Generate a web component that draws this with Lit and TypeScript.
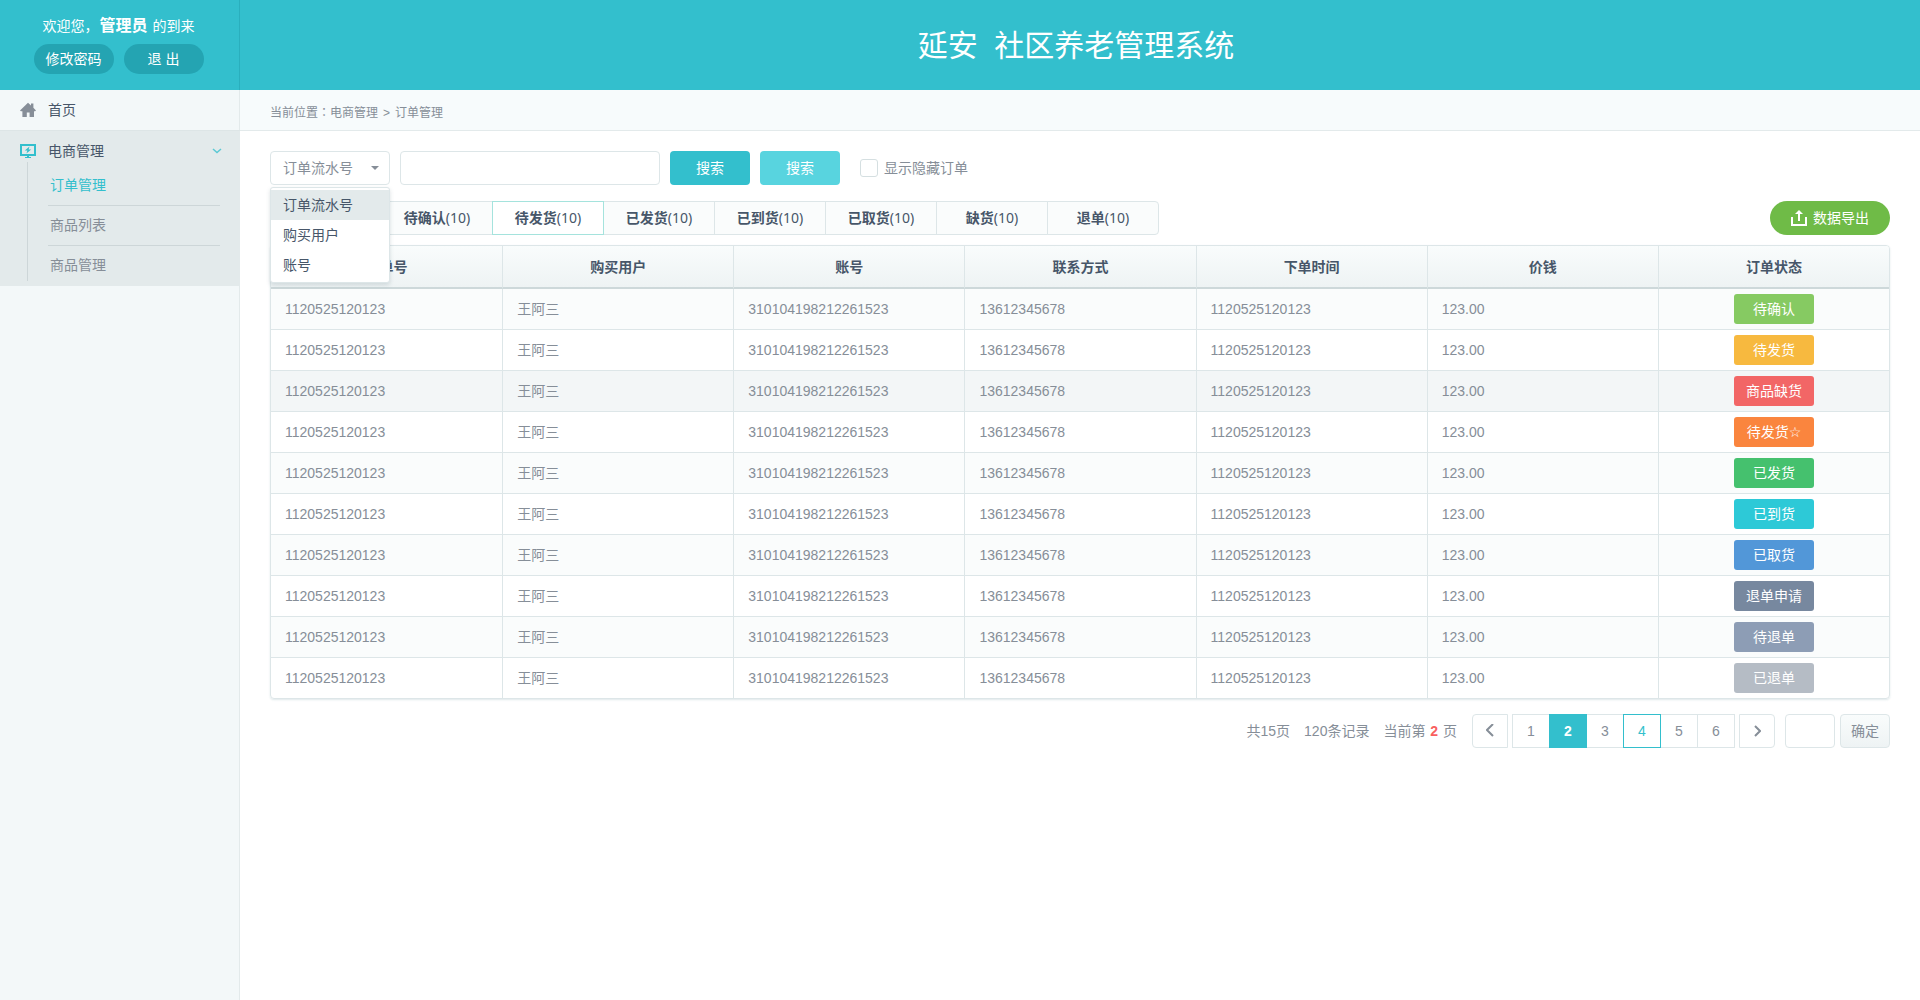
import { LitElement, html, css, svg } from "lit";
import { customElement, state } from "lit/decorators.js";
import { classMap } from "lit/directives/class-map.js";

const FIELDS = ["订单流水号", "购买用户", "账号"];

const TABS = ["全部", "待确认", "待发货", "已发货", "已到货", "已取货", "缺货", "退单"];

const COLUMNS = ["订单号", "购买用户", "账号", "联系方式", "下单时间", "价钱", "订单状态"];

const STATUSES = [
  { label: "待确认", tone: "lime" },
  { label: "待发货", tone: "amber" },
  { label: "商品缺货", tone: "red" },
  { label: "待发货", tone: "orange", starred: true },
  { label: "已发货", tone: "green" },
  { label: "已到货", tone: "cyan" },
  { label: "已取货", tone: "blue" },
  { label: "退单申请", tone: "slate" },
  { label: "待退单", tone: "steel" },
  { label: "已退单", tone: "grey" },
];

const ORDERS = STATUSES.map((status) => ({
  id: "1120525120123",
  buyer: "王阿三",
  account: "310104198212261523",
  phone: "13612345678",
  time: "1120525120123",
  price: "123.00",
  status,
}));

const FONT = css`"Liberation Sans", "Noto Sans CJK SC", sans-serif`;

const controls = css`
  * {
    box-sizing: border-box;
  }
  button,
  input,
  select {
    margin: 0;
    padding: 0;
    border: 0;
    font: inherit;
    color: inherit;
    background: none;
  }
  button {
    cursor: pointer;
  }
  a {
    color: inherit;
    text-decoration: none;
  }
  ul {
    margin: 0;
    padding: 0;
    list-style: none;
  }
  svg {
    display: block;
    flex: none;
  }
`;

@customElement("side-bar")
class SideBar extends LitElement {
  static styles = [
    controls,
    css`
      :host {
        display: flex;
        flex-direction: column;
        background: #f3f8f9;
        border-right: 1px solid #e3eaeb;
      }
      .user {
        height: 90px;
        padding: 12px 2px 0 0;
        margin-right: -1px;
        border-right: 1px solid #2aafbd;
        background: #33bfcd;
        color: #fff;
        display: flex;
        flex-direction: column;
        align-items: center;
        gap: 4px;
      }
      .welcome {
        margin: 0;
        line-height: 28px;
        white-space: nowrap;
      }
      .welcome strong {
        margin: 0 1px;
        font-size: 16px;
      }
      .actions {
        display: flex;
        gap: 10px;
      }
      .pill {
        width: 80px;
        height: 30px;
        border-radius: 15px;
        background: #24a4b2;
        color: #fff;
      }
      .link {
        display: flex;
        align-items: center;
        gap: 12px;
        width: 100%;
        padding: 0 18px 0 20px;
        color: #475669;
        text-align: left;
      }
      .home {
        height: 40px;
      }
      .group {
        margin-right: -1px;
        padding: 7px 0 5px;
        border-top: 1px solid #dde5e6;
        background: #e3eaeb;
      }
      .head {
        height: 26px;
      }
      .head span {
        flex: 1;
      }
      .sub {
        margin: -2px 20px 0 27px;
        padding: 4px 0 0 20px;
        border-left: 1px solid #cdd6d8;
        color: #868e98;
      }
      .sub li {
        height: 40px;
        padding-left: 2px;
        line-height: 38px;
        border-bottom: 1px solid #cdd6d8;
      }
      .sub li:last-child {
        height: 35px;
        border: 0;
      }
      .current {
        color: #33bfcd;
      }
    `,
  ];

  render() {
    return html`
      <div class="user">
        <p class="welcome">欢迎您，<strong>管理员</strong> 的到来</p>
        <div class="actions">
          <button class="pill">修改密码</button>
          <button class="pill">退 出</button>
        </div>
      </div>
      <nav>
        <a class="link home" href="#home">
          <svg width="16" height="16" viewBox="0 0 16 16" fill="#868e98">
            <path d="M8 0.8 11 3.6V1.4h2.4v4.4L16 8.4l-.9.9H14V15H9.6v-4.6H6.8V15H2.4V9.3H.9L0 8.4z" />
          </svg>
          <span>首页</span>
        </a>
        <section class="group">
          <button class="link head" aria-expanded="true">
            <svg width="16" height="14" viewBox="0 0 16 14">
              <path fill="none" stroke="#33bfcd" stroke-width="2" d="M1 1h14v10H1z" />
              <path fill="#33bfcd" d="M9.5 2.4 4.8 6.6h2.6L6.4 9.6l4.8-4.2H8.6zM7 12h2v1h2v1H5v-1h2z" />
            </svg>
            <span>电商管理</span>
            <svg width="10" height="6" viewBox="0 0 10 6">
              <path fill="none" stroke="#5cc9d4" stroke-width="1.5" d="M1 1l4 3.5L9 1" />
            </svg>
          </button>
          <ul class="sub">
            <li><a class="current" href="#orders">订单管理</a></li>
            <li><a href="#goods">商品列表</a></li>
            <li><a href="#manage">商品管理</a></li>
          </ul>
        </section>
      </nav>
    `;
  }
}

@customElement("search-bar")
class SearchBar extends LitElement {
  @state() private field = FIELDS[0];
  @state() private open = true;

  static styles = [
    controls,
    css`
      :host {
        display: flex;
        align-items: center;
        gap: 10px;
        color: #868e98;
      }
      .picker {
        position: relative;
        width: 120px;
      }
      .picker::after {
        content: "";
        position: absolute;
        right: 11px;
        top: 15px;
        border: 4px solid transparent;
        border-top-color: #868e98;
        border-bottom: 0;
        pointer-events: none;
      }
      .box {
        height: 34px;
        border: 1px solid #dde6e8;
        border-radius: 4px;
        background: #fff;
      }
      .select {
        width: 100%;
        padding: 0 24px 0 12px;
        appearance: none;
      }
      .text {
        width: 260px;
        padding: 0 10px;
      }
      .menu {
        position: absolute;
        z-index: 2;
        top: 36px;
        left: 0;
        right: 0;
        padding: 2px 0;
        border: 1px solid #dde6e8;
        border-radius: 3px;
        background: #fff;
        box-shadow: 0 2px 4px rgba(60, 90, 100, 0.18);
        color: #475669;
      }
      .menu li {
        height: 30px;
        padding: 0 12px;
        line-height: 30px;
      }
      .menu .chosen {
        background: #e3eaeb;
      }
      .button {
        width: 80px;
        height: 34px;
        border-radius: 4px;
        background: #33bfcd;
        color: #fff;
      }
      .light {
        background: #58d4df;
      }
      .check {
        display: flex;
        align-items: center;
        gap: 6px;
        margin-left: 10px;
      }
      .check input {
        width: 18px;
        height: 18px;
        border: 1px solid #d5dfe1;
        border-radius: 3px;
        background: #fff;
        appearance: none;
      }
      .check input:checked {
        background: #33bfcd;
      }
    `,
  ];

  private choose(field: string) {
    this.field = field;
    this.open = false;
  }

  render() {
    return html`
      <div class="picker">
        <select
          class="box select"
          aria-label="搜索字段"
          .value=${this.field}
          @change=${(e: Event) => this.choose((e.target as HTMLSelectElement).value)}
        >
          ${FIELDS.map((f) => html`<option>${f}</option>`)}
        </select>
        ${this.open
          ? html`<ul class="menu" role="listbox" aria-label="搜索字段">
              ${FIELDS.map(
                (f) => html`<li
                  role="option"
                  aria-selected=${f === this.field}
                  class=${classMap({ chosen: f === this.field })}
                  @click=${() => this.choose(f)}
                >
                  ${f}
                </li>`
              )}
            </ul>`
          : ""}
      </div>
      <input class="box text" type="text" aria-label="搜索内容" />
      <button class="button">搜索</button>
      <button class="button light">搜索</button>
      <label class="check"><input type="checkbox" />显示隐藏订单</label>
    `;
  }
}

@customElement("status-tabs")
class StatusTabs extends LitElement {
  @state() private active = 2;

  static styles = [
    controls,
    css`
      :host {
        display: flex;
        justify-content: space-between;
        color: #475669;
      }
      .tabs {
        display: flex;
      }
      .tab {
        width: 112px;
        height: 34px;
        margin-right: -1px;
        border: 1px solid #dde6e8;
        background: #fafcfc;
        font-family: "Noto Sans", "Noto Sans CJK SC", sans-serif;
      }
      .tab:first-child {
        border-radius: 4px 0 0 4px;
      }
      .tab:last-child {
        border-radius: 0 4px 4px 0;
      }
      .tab.active {
        z-index: 1;
        border-color: #a5e3dd;
        background: #fff;
      }
      .export {
        display: flex;
        align-items: center;
        justify-content: center;
        gap: 6px;
        width: 120px;
        height: 34px;
        border-radius: 17px;
        background: #6fbb47;
        color: #fff;
      }
    `,
  ];

  render() {
    return html`
      <div class="tabs">
        ${TABS.map(
          (t, i) => html`<button
            class=${classMap({ tab: true, active: i === this.active })}
            @click=${() => (this.active = i)}
          ><b>${t}</b>(10)</button>`
        )}
      </div>
      <button class="export">
        <svg width="16" height="16" viewBox="0 0 16 16">
          <path fill="none" stroke="#fff" stroke-width="2" d="M1 7v8h14V7M8 11V3" />
          <path fill="#fff" d="M8 0l4 4H4z" />
        </svg>
        数据导出
      </button>
    `;
  }
}

@customElement("order-table")
class OrderTable extends LitElement {
  static styles = [
    controls,
    css`
      :host {
        display: block;
        border: 1px solid #dde6e8;
        border-radius: 4px;
        box-shadow: 0 1px 2px rgba(150, 180, 185, 0.3);
        overflow: hidden;
        color: #868e98;
      }
      table {
        width: 100%;
        table-layout: fixed;
        border-collapse: separate;
        border-spacing: 0;
      }
      th,
      td {
        border-left: 1px solid #dde6e8;
        padding: 0 14px;
        text-align: left;
      }
      th:first-child,
      td:first-child {
        border-left: 0;
      }
      th {
        height: 43px;
        border-bottom: 2px solid #cdd8da;
        background: linear-gradient(#f9fcfc, #eef3f4);
        color: #475669;
        text-align: center;
      }
      td {
        height: 41px;
        border-bottom: 1px solid #dde6e8;
      }
      tr:last-child td {
        height: 40px;
        border-bottom: 0;
      }
      tbody tr:nth-child(odd) {
        background: #fafcfc;
      }
      tbody tr.hover {
        background: #f3f6f7;
      }
      td:last-child {
        text-align: center;
      }
      .badge {
        display: inline-block;
        vertical-align: middle;
        width: 80px;
        height: 30px;
        line-height: 30px;
        border-radius: 3px;
        color: #fff;
        white-space: nowrap;
      }
      .star {
        font-family: "DejaVu Sans", sans-serif;
      }
      .lime { background: #86ca62; }
      .amber { background: #f7b93f; }
      .red { background: #f26666; }
      .orange { background: #fa853e; }
      .green { background: #45c16e; }
      .cyan { background: #2dc9d7; }
      .blue { background: #5297d8; }
      .slate { background: #77889f; }
      .steel { background: #8d9db5; }
      .grey { background: #b5bcc5; }
    `,
  ];

  render() {
    return html`
      <table>
        <thead>
          <tr>
            ${COLUMNS.map((c) => html`<th scope="col">${c}</th>`)}
          </tr>
        </thead>
        <tbody>
          ${ORDERS.map(
            (o, i) => html`<tr class=${classMap({ hover: i === 2 })}>
              <td>${o.id}</td>
              <td>${o.buyer}</td>
              <td>${o.account}</td>
              <td>${o.phone}</td>
              <td>${o.time}</td>
              <td>${o.price}</td>
              <td>
                <span class="badge ${o.status.tone}"
                  >${o.status.label}${o.status.starred ? html`<span class="star">☆</span>` : ""}</span
                >
              </td>
            </tr>`
          )}
        </tbody>
      </table>
    `;
  }
}

@customElement("page-bar")
class PageBar extends LitElement {
  @state() private page = 2;

  static styles = [
    controls,
    css`
      :host {
        display: flex;
        align-items: center;
        justify-content: flex-end;
        color: #868e98;
      }
      .info {
        display: flex;
        gap: 14px;
        margin-right: 15px;
      }
      .info b {
        margin: 0 1px;
        color: #f95f5f;
      }
      .box {
        display: flex;
        align-items: center;
        justify-content: center;
        height: 34px;
        border: 1px solid #dde6e8;
        background: #fff;
      }
      .arrow {
        width: 36px;
      }
      .prev {
        border-radius: 4px 0 0 4px;
      }
      .next {
        border-radius: 0 4px 4px 0;
      }
      .pages {
        display: flex;
        margin: 0 4px;
      }
      .page {
        width: 38px;
        margin-right: -1px;
      }
      .page:last-child {
        margin-right: 0;
      }
      .on {
        z-index: 1;
        border-color: #33bfcd;
        background: #33bfcd;
        color: #fff;
        font-weight: bold;
      }
      .hover {
        z-index: 1;
        border-color: #33bfcd;
        color: #33bfcd;
      }
      .jump {
        width: 50px;
        margin: 0 5px 0 10px;
        border-radius: 4px;
        text-align: center;
      }
      .go {
        width: 50px;
        border-radius: 4px;
        background: linear-gradient(#f9fcfc, #eef3f4);
      }
    `,
  ];

  private arrow(d: string) {
    return html`<svg width="8" height="14" viewBox="0 0 8 14">
      ${svg`<path fill="none" stroke="#868e98" stroke-width="2" d=${d} />`}
    </svg>`;
  }

  render() {
    return html`
      <div class="info">
        <span>共15页</span><span>120条记录</span><span>当前第 <b>${this.page}</b> 页</span>
      </div>
      <button class="box arrow prev" aria-label="上一页">${this.arrow("M7 0 1 6l6 6")}</button>
      <div class="pages">
        ${[1, 2, 3, 4, 5, 6].map(
          (n) => html`<button
            class=${classMap({ box: true, page: true, on: n === this.page, hover: n === 4 && n !== this.page })}
            @click=${() => (this.page = n)}
          >${n}</button>`
        )}
      </div>
      <button class="box arrow next" aria-label="下一页">${this.arrow("M2 2l5 5-5 5")}</button>
      <input class="box jump" type="text" aria-label="页码" />
      <button class="box go">确定</button>
    `;
  }
}

@customElement("app-root")
class AppRoot extends LitElement {
  static styles = [
    controls,
    css`
      :host {
        display: grid;
        grid-template-columns: 240px 1fr;
        min-height: 100vh;
        background: #fff;
        font: 14px/20px ${FONT};
      }
      .banner {
        display: flex;
        align-items: center;
        justify-content: center;
        height: 90px;
        padding: 2px 8px 0 0;
        background: #33bfcd;
        color: #fff;
      }
      h1 {
        margin: 0;
        font-size: 30px;
        font-weight: normal;
        line-height: 40px;
      }
      .crumbs {
        height: 41px;
        padding: 0 30px;
        border-bottom: 1px solid #e3eaeb;
        background: #f7fbfc;
        color: #868e98;
        font-size: 12px;
        line-height: 43px;
      }
      .colon {
        font-family: "Noto Sans CJK JP", sans-serif;
      }
      .sep {
        margin: 0 5px;
      }
      .content {
        display: flex;
        flex-direction: column;
        padding: 20px 30px;
      }
      status-tabs {
        margin: 16px 0 10px;
      }
      page-bar {
        margin-top: 15px;
      }
    `,
  ];

  render() {
    return html`
      <side-bar></side-bar>
      <main>
        <header class="banner"><h1>延安&nbsp;&nbsp;社区养老管理系统</h1></header>
        <nav class="crumbs">
          当前位置<span class="colon" lang="ja">：</span><a href="#shop">电商管理</a
          ><span class="sep">&gt;</span><a href="#orders">订单管理</a>
        </nav>
        <div class="content">
          <search-bar></search-bar>
          <status-tabs></status-tabs>
          <order-table></order-table>
          <page-bar></page-bar>
        </div>
      </main>
    `;
  }
}
